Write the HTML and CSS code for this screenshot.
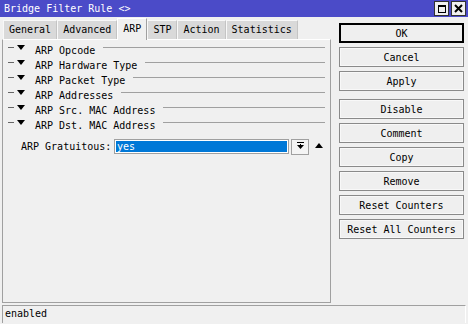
FILE: index.html
```html
<!DOCTYPE html>
<html lang="en">
<head>
    <meta charset="UTF-8">
    <title>Bridge Filter Rule</title>
    <link rel="stylesheet" href="styles.css">
</head>
<body>
    <div class="window">
        <div class="titlebar">
            <span class="title">Bridge Filter Rule &lt;&gt;</span>
            <div class="winbtns">
                <div class="winbtn"><span class="maxbox"></span></div>
                <div class="winbtn close">
                    <svg width="9" height="9" viewBox="0 0 9 9"><path d="M1 1L8 8M8 1L1 8" stroke="#000" stroke-width="2"/></svg>
                </div>
            </div>
        </div>

        <div class="main">
            <div class="left">
                <div class="tabs">
                    <div class="tab">General</div>
                    <div class="tab">Advanced</div>
                    <div class="tab active">ARP</div>
                    <div class="tab">STP</div>
                    <div class="tab">Action</div>
                    <div class="tab">Statistics</div>
                </div>
                <div class="panel">
                    <div class="section"><span class="dash"></span><span class="tri"></span><span class="stitle">ARP Opcode</span><span class="line"></span></div>
                    <div class="section"><span class="dash"></span><span class="tri"></span><span class="stitle">ARP Hardware Type</span><span class="line"></span></div>
                    <div class="section"><span class="dash"></span><span class="tri"></span><span class="stitle">ARP Packet Type</span><span class="line"></span></div>
                    <div class="section"><span class="dash"></span><span class="tri"></span><span class="stitle">ARP Addresses</span><span class="line"></span></div>
                    <div class="section"><span class="dash"></span><span class="tri"></span><span class="stitle">ARP Src. MAC Address</span><span class="line"></span></div>
                    <div class="section"><span class="dash"></span><span class="tri"></span><span class="stitle">ARP Dst. MAC Address</span><span class="line"></span></div>

                    <div class="field">
                        <label class="flabel">ARP Gratuitous:</label>
                        <div class="select"><span class="selval">yes</span></div>
                        <div class="dropbtn">
                            <svg width="9" height="9" viewBox="0 0 9 9"><path d="M1 0.5H8" stroke="#000"/><path d="M1 3H8L4.5 7Z" fill="#000"/><path d="M4.5 2V4" stroke="#000"/></svg>
                        </div>
                        <span class="uptri"></span>
                    </div>
                </div>
            </div>

            <div class="right">
                <button class="btn default">OK</button>
                <button class="btn">Cancel</button>
                <button class="btn">Apply</button>
                <button class="btn spaced">Disable</button>
                <button class="btn">Comment</button>
                <button class="btn">Copy</button>
                <button class="btn">Remove</button>
                <button class="btn">Reset Counters</button>
                <button class="btn">Reset All Counters</button>
            </div>
        </div>

        <div class="status">enabled</div>
    </div>
</body>
</html>
```

FILE: styles.css
```css
body {
    margin: 0;
    background: #f0f0f0;
    font-family: "DejaVu Sans Mono", "Liberation Mono", monospace;
    font-size: 10px;
    color: #000;
}
.window {
    width: 468px;
    height: 324px;
    display: flex;
    flex-direction: column;
    background: #f0f0f0;
}
.titlebar {
    height: 17px;
    background: #4b4bc8;
    display: flex;
    align-items: center;
    justify-content: space-between;
    padding: 0 2px 0 4px;
    color: #fff;
}
.winbtns {
    display: flex;
    gap: 2px;
}
.winbtn {
    width: 13px;
    height: 13px;
    border: 1px solid #333;
    background: #f0f0f0;
    display: flex;
    align-items: center;
    justify-content: center;
}
.maxbox {
    width: 8px;
    height: 8px;
    border: 1px solid #000;
    border-top-width: 2px;
    box-sizing: border-box;
}
.main {
    display: flex;
    height: 286px;
}
.left {
    width: 329px;
    margin-left: 2px;
    display: flex;
    flex-direction: column;
}
.tabs {
    height: 22px;
    display: flex;
    align-items: flex-end;
    padding-left: 1px;
}
.tab {
    height: 18px;
    line-height: 18px;
    padding: 0 5px;
    background: #d9d9d9;
    border: 1px solid #f8f8f8;
    border-bottom: none;
    border-right-color: #c4c4c4;
}
.tab.active {
    height: 21px;
    line-height: 19px;
    background: #f0f0f0;
    border-color: #fff;
    border-right-color: #a0a0a0;
    margin-bottom: -1px;
    position: relative;
}
.panel {
    flex: 1;
    border: 1px solid #a0a0a0;
    border-top-color: #fff;
    padding: 2px 5px 0 4px;
}
.section {
    height: 15px;
    display: flex;
    align-items: center;
}
.dash {
    width: 6px;
    height: 1px;
    background: #666;
    margin: 0 3px 4px 1px;
}
.tri {
    width: 0;
    height: 0;
    border-left: 4.5px solid transparent;
    border-right: 4.5px solid transparent;
    border-top: 5px solid #000;
    margin: 0 10px 4px 0;
}
.stitle {
    white-space: nowrap;
    padding-top: 1px;
}
.line {
    flex: 1;
    height: 1px;
    background: #a0a0a0;
    margin: 0 0 4px 8px;
}
.field {
    display: flex;
    align-items: center;
    margin-top: 7px;
    padding-left: 14px;
    height: 15px;
}
.flabel {
    width: 93px;
    white-space: nowrap;
}
.select {
    width: 171px;
    height: 11px;
    border: 1px solid #a0a0a0;
    background: #fff;
    padding: 1px;
    box-sizing: content-box;
}
.selval {
    display: block;
    height: 11px;
    line-height: 11px;
    background: #0078d7;
    color: #fff;
    padding-left: 1px;
}
.dropbtn {
    width: 16px;
    height: 14px;
    border: 1px solid #a0a0a0;
    margin-left: 2px;
    background: #f4f4f4;
    display: flex;
    align-items: center;
    justify-content: center;
}
.uptri {
    width: 0;
    height: 0;
    border-left: 4.5px solid transparent;
    border-right: 4.5px solid transparent;
    border-bottom: 5px solid #000;
    margin: 0 0 3px 6px;
}
.right {
    margin-left: 8px;
    padding-top: 6px;
    display: flex;
    flex-direction: column;
    gap: 4px;
}
.btn {
    width: 125px;
    height: 20px;
    margin: 0;
    padding: 0;
    font: inherit;
    color: #000;
    background: #efefef;
    border: 1px solid #8a8a8a;
    box-shadow: inset 0 0 0 1px #f8f8f8;
}
.btn.default {
    border: 2px solid #000;
    box-shadow: none;
}
.btn.spaced {
    margin-top: 4px;
}
.status {
    margin: 2px 2px 0 2px;
    height: 17px;
    line-height: 16px;
    border: 1px solid #a0a0a0;
    border-right-color: #fff;
    border-bottom: none;
    padding-left: 2px;
}
```
